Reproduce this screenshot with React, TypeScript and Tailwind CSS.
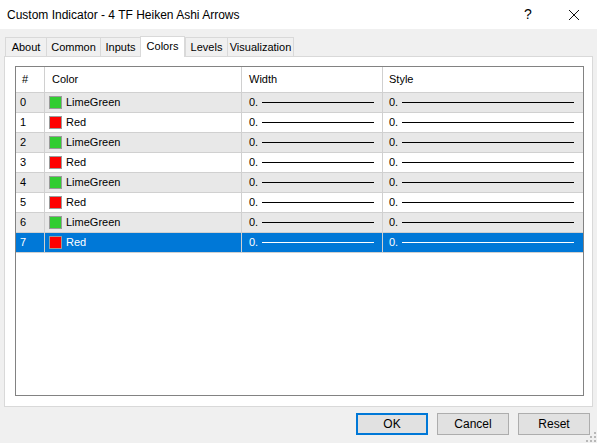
const rows = [
  { name: 'LimeGreen', color: '#32cd32' },
  { name: 'Red', color: '#ff0000' },
  { name: 'LimeGreen', color: '#32cd32' },
  { name: 'Red', color: '#ff0000' },
  { name: 'LimeGreen', color: '#32cd32' },
  { name: 'Red', color: '#ff0000' },
  { name: 'LimeGreen', color: '#32cd32' },
  { name: 'Red', color: '#ff0000' },
]

const tabs = [
  { label: 'About', w: 'w-[41px]' },
  { label: 'Common', w: 'w-[54px]' },
  { label: 'Inputs', w: 'w-[40px]' },
  { label: 'Colors', w: 'w-[45px]' },
  { label: 'Levels', w: 'w-[42px]' },
  { label: 'Visualization', w: 'w-[67px]' },
]

export default function App() {
  return (
    <div
      className="w-[597px] h-[443px] bg-[#f0f0f0] text-[11px] text-black flex flex-col overflow-hidden"
      style={{ fontFamily: '"Segoe UI", "Liberation Sans", Arial, sans-serif' }}
    >
      {/* title bar */}
      <div className="h-[29px] bg-white flex items-center pl-[7px] shrink-0">
        <span className="text-[12px] flex-1">Custom Indicator - 4 TF Heiken Ashi Arrows</span>
        <span className="w-[46px] text-center text-[14px]">?</span>
        <span className="w-[46px] flex justify-center">
          <svg width="12" height="12" viewBox="0 0 12 12">
            <path d="M1 1 L11 11 M11 1 L1 11" stroke="#111" strokeWidth="1" />
          </svg>
        </span>
      </div>

      {/* tabs */}
      <div className="flex pl-[5px] pt-[7px] h-[27px] shrink-0 items-end">
        {tabs.map((t) =>
          t.label === 'Colors' ? (
            <div
              key={t.label}
              className={`${t.w} h-[21px] -mb-px bg-white border border-[#d9d9d9] border-b-0 flex items-center justify-center relative z-10 pb-[2px]`}
            >
              {t.label}
            </div>
          ) : (
            <div
              key={t.label}
              className={`${t.w} h-[19px] bg-[#f0f0f0] border border-[#d9d9d9] border-b-0 border-r-0 last:border-r flex items-center justify-center`}
            >
              {t.label}
            </div>
          ),
        )}
      </div>

      {/* panel */}
      <div className="ml-[4px] w-[589px] h-[351px] bg-white border border-[#d9d9d9] pl-[10px] pr-[8px] pt-[9px] pb-[10px] shrink-0">
        <div className="h-full border border-[#828282] bg-white">
          <div className="flex h-[26px] border-b border-[#d0d0d0]">
            <div className="w-[29px] pl-[6px] flex items-center border-r border-[#d0d0d0]">#</div>
            <div className="w-[197px] pl-[7px] flex items-center border-r border-[#d0d0d0]">Color</div>
            <div className="w-[141px] pl-[7px] flex items-center border-r border-[#d0d0d0]">Width</div>
            <div className="flex-1 pl-[6px] flex items-center">Style</div>
          </div>
          {rows.map((r, i) => {
            const sel = i === 7
            const bg = sel ? 'bg-[#0078d7] text-white' : i % 2 === 0 ? 'bg-[#e8e8e8]' : 'bg-white'
            const line = sel ? 'bg-white' : 'bg-black'
            return (
              <div key={i} className={`flex h-[20px] border-b border-[#d0d0d0] ${bg}`}>
                <div className="w-[29px] pl-[4px] flex items-center border-r border-[#d0d0d0]">{i}</div>
                <div className="w-[197px] pl-[4px] flex items-center gap-[4px] border-r border-[#d0d0d0]">
                  <span
                    className="w-[13px] h-[13px] border border-[#9a9a9a] inline-block"
                    style={{ backgroundColor: r.color }}
                  />
                  <span>{r.name}</span>
                </div>
                <div className="w-[141px] pl-[7px] flex items-center gap-[4px] border-r border-[#d0d0d0]">
                  <span>0.</span>
                  <span className={`h-px w-[112px] ${line}`} />
                </div>
                <div className="flex-1 pl-[6px] flex items-center gap-[4px]">
                  <span>0.</span>
                  <span className={`h-px w-[172px] ${line}`} />
                </div>
              </div>
            )
          })}
        </div>
      </div>

      {/* buttons */}
      <div className="flex justify-end gap-[9px] pr-[7px] pt-[6px] relative flex-1 text-[12px]">
        <button className="w-[72px] h-[22px] bg-[#e1e1e1] border-2 border-[#0078d7] flex items-center justify-center">OK</button>
        <button className="w-[72px] h-[22px] bg-[#e1e1e1] border border-[#adadad] flex items-center justify-center">Cancel</button>
        <button className="w-[72px] h-[22px] bg-[#e1e1e1] border border-[#adadad] flex items-center justify-center">Reset</button>
        <svg className="absolute right-[1px] bottom-[1px]" width="10" height="10" viewBox="0 0 10 10">
          <g fill="#b8b8b8">
            <rect x="8" y="0" width="2" height="2" />
            <rect x="4" y="4" width="2" height="2" />
            <rect x="8" y="4" width="2" height="2" />
            <rect x="0" y="8" width="2" height="2" />
            <rect x="4" y="8" width="2" height="2" />
            <rect x="8" y="8" width="2" height="2" />
          </g>
        </svg>
      </div>
    </div>
  )
}
